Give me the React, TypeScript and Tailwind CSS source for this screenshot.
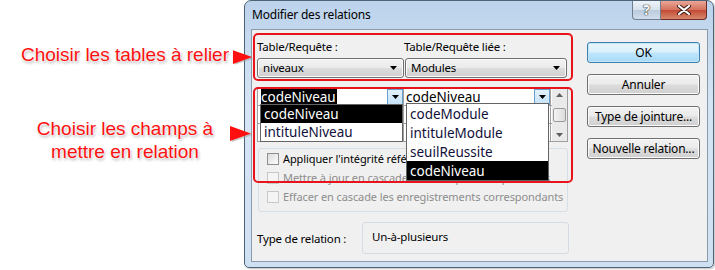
const ui = "font-['Noto_Sans',sans-serif]";

const btnFace =
  "bg-[linear-gradient(#f2f2f2_0%,#ebebeb_48%,#dddddd_52%,#cfcfcf_100%)] border-[#707070] shadow-[inset_0_0_0_1px_#fbfbfb]";
const okFace =
  "bg-[linear-gradient(#eaf6fd_0%,#d9f0fc_48%,#bee6fd_52%,#a7d9f5_100%)] border-[#3c7fb1] shadow-[inset_0_0_0_1px_#c4e5f6]";

function Triangle({ className = "" }: { className?: string }) {
  return (
    <svg viewBox="0 0 7 4" className={"h-[4px] w-[7px] shrink-0 " + className}>
      <path d="M0 0 L7 0 L3.5 4 Z" fill="#000" />
    </svg>
  );
}

function Arrow({ className }: { className: string }) {
  return (
    <svg viewBox="0 0 24 18" className={className}>
      <polygon points="2,2 23,9 2,16" fill="#9a9a9a" opacity="0.5" transform="translate(1,1)" />
      <polygon points="1,1 22,8.5 1,16" fill="#ff1010" />
    </svg>
  );
}

function Button({ label, primary = false }: { label: string; primary?: boolean }) {
  return (
    <div
      className={
        "flex h-[21px] items-center justify-center rounded-[3px] border text-[12px] tracking-[-0.2px] text-black " +
        (primary ? okFace : btnFace)
      }
    >
      {label}
    </div>
  );
}

function Combo({ text, className }: { text: string; className: string }) {
  return (
    <div
      className={
        "flex h-[20px] items-center justify-between rounded-[3px] border pl-[5px] pr-[6px] text-black " +
        btnFace +
        " " +
        className
      }
    >
      <span>{text}</span>
      <Triangle />
    </div>
  );
}

function DropButton() {
  return (
    <div className="flex h-[16px] w-[16px] shrink-0 items-center justify-center border border-[#6aa0d0] bg-[linear-gradient(#e3f1fc,#c6e2f8)]">
      <Triangle />
    </div>
  );
}

function Check({ label, disabled = false }: { label: string; disabled?: boolean }) {
  return (
    <div className="flex h-[19px] items-center gap-[4px] whitespace-nowrap">
      <div
        className={
          "h-[12px] w-[12px] shrink-0 border " +
          (disabled
            ? "border-[#c8c8c8] bg-[#f4f4f4]"
            : "border-[#8e8f8f] bg-[linear-gradient(135deg,#dcdcdc,#fdfdfd)]")
        }
      />
      <span className={"text-[11px] tracking-[-0.1px] " + (disabled ? "text-[#8d8d8d]" : "text-black")}>{label}</span>
    </div>
  );
}

function Grid() {
  return (
    <div className="relative mt-[10px] h-[54px] w-[311px] border border-[#a0a0a0] bg-white text-[13.5px] leading-[16px] tracking-normal">
      <div className="flex h-[17px] border-b border-[#a0a0a0]">
        <div className="flex w-[146px] items-center justify-between border-r border-[#a0a0a0] pl-[3px]">
          <span className="bg-black pr-[1px] text-white">codeNiveau</span>
          <DropButton />
        </div>
        <div className="flex w-[147px] items-center justify-between border-r border-[#a0a0a0] pl-[2px]">
          <span className="text-black">codeNiveau</span>
          <DropButton />
        </div>
        <div />
      </div>
      <div className="flex h-[18px] border-b border-[#a0a0a0]">
        <div className="w-[146px] border-r border-[#a0a0a0]" />
        <div className="w-[147px] border-r border-[#a0a0a0]" />
      </div>
      <div className="flex h-[17px]">
        <div className="w-[146px] border-r border-[#a0a0a0]" />
        <div className="w-[147px] border-r border-[#a0a0a0]" />
      </div>

      {/* scrollbar */}
      <div className="absolute right-0 top-0 flex h-[52px] w-[15px] flex-col items-center justify-between bg-[#eaeaea] py-[4px]">
        <svg viewBox="0 0 7 4" className="h-[4px] w-[7px]">
          <path d="M0 4 L7 4 L3.5 0 Z" fill="#606060" />
        </svg>
        <div className="h-[14px] w-[13px] rounded-[2px] border border-[#9a9a9a] bg-[linear-gradient(90deg,#f3f3f3,#dcdcdc)]" />
        <Triangle className="opacity-60" />
      </div>

      {/* open drop-down lists */}
      <div className="absolute left-[2px] top-[15px] w-[143px] border border-[#646464] bg-white">
        <div className="flex h-[18px] items-center bg-black pl-[3px] text-white">codeNiveau</div>
        <div className="flex h-[18px] items-center pl-[3px] text-[#10103a]">intituleNiveau</div>
      </div>
      <div className="absolute left-[148px] top-[14px] z-10 w-[143px] border border-[#646464] bg-white">
        <div className="flex h-[19px] items-center pl-[3px] text-[#10103a]">codeModule</div>
        <div className="flex h-[19px] items-center pl-[3px] text-[#10103a]">intituleModule</div>
        <div className="flex h-[19px] items-center pl-[3px] text-[#10103a]">seuilReussite</div>
        <div className="flex h-[19px] items-center bg-black pl-[3px] text-white">codeNiveau</div>
      </div>
    </div>
  );
}

function Dialog() {
  return (
    <div
      className={
        "flex h-[268px] w-[470px] shrink-0 flex-col rounded-t-[7px] rounded-b-[5px] border border-[#4f6377] bg-[linear-gradient(#bcd3ec,#d6e5f4_40%,#cfe0f2)] pb-[5px] pl-[6px] pr-[5px] shadow-[1px_1px_2px_rgba(0,0,0,0.25)] " +
        ui
      }
    >
      <div className="flex h-[28px] items-start justify-between">
        <span className="self-center pl-[1px] text-[12px] tracking-[-0.2px] text-black">Modifier des relations</span>
        <div className="mr-[1px] flex">
          <div className="flex h-[19px] w-[29px] items-center justify-center rounded-bl-[4px] border border-t-0 border-[#6f7f90] bg-[linear-gradient(#eef3f8_0%,#d8e2ed_48%,#bccbdb_52%,#d0dded_100%)] text-[14px] font-bold leading-none text-white [text-shadow:0_0_1px_#333,0_0_1px_#333,0_0_1px_#333]">
            ?
          </div>
          <div className="flex h-[19px] w-[46px] items-center justify-center rounded-br-[4px] border border-l-0 border-t-0 border-[#6b2c23] bg-[linear-gradient(#eaa698_0%,#d6735f_48%,#c24b36_52%,#d88a6c_100%)]">
            <svg viewBox="0 0 14 10" className="h-[10px] w-[14px]">
              <path d="M2 1 L12 9 M12 1 L2 9" stroke="#3a1a14" strokeWidth="4" strokeLinecap="round" />
              <path d="M2 1 L12 9 M12 1 L2 9" stroke="#ffffff" strokeWidth="2.2" strokeLinecap="round" />
            </svg>
          </div>
        </div>
      </div>

      <div className="flex flex-1 border border-[#8a9bad] bg-[#f0f0f0] text-[11.5px] leading-[16px] tracking-[-0.2px]">
        <div className="ml-[5px] flex w-[312px] flex-col pt-[9px]">
          <div className="flex h-[16px] text-black">
            <span className="w-[147px]">Table/Requête :</span>
            <span>Table/Requête liée :</span>
          </div>
          <div className="mt-[3px] flex gap-[1px]">
            <Combo text="niveaux" className="w-[147px]" />
            <Combo text="Modules" className="w-[162px]" />
          </div>

          <Grid />

          <div className="ml-[1px] mt-[6px] h-[64px] w-[310px] rounded-[3px] border border-[#d5dfe5] pl-[8px]">
            <Check label="Appliquer l'intégrité référentielle" />
            <Check label="Mettre à jour en cascade les champs correspondants" disabled />
            <Check label="Effacer en cascade les enregistrements correspondants" disabled />
          </div>

          <div className="mt-[10px] flex items-center">
            <span className="mt-[2px] w-[105px] text-black">Type de relation :</span>
            <div className="h-[32px] w-[207px] rounded-[3px] border border-[#d5dbe2] pl-[9px] pt-[6px] text-black">
              Un-à-plusieurs
            </div>
          </div>
        </div>

        <div className="ml-[18px] flex w-[113px] flex-col gap-[11px] pt-[12px]">
          <Button label="OK" primary />
          <Button label="Annuler" />
          <Button label="Type de jointure..." />
          <Button label="Nouvelle relation..." />
        </div>
      </div>
    </div>
  );
}

function Notes() {
  return (
    <div className="flex w-[244px] shrink-0 flex-col items-center pl-[6px] pt-[44px] font-['Liberation_Sans',Arial,sans-serif] text-[19px] text-[#ff1010] [text-shadow:0_0_2px_#fff,0_0_2px_#fff,1px_2px_3px_rgba(0,0,0,0.35)]">
      <p className="leading-[22px]">Choisir les tables à relier</p>
      <p className="mt-[51px] text-center leading-[23px]">
        Choisir les champs à
        <br />
        mettre en relation
      </p>
    </div>
  );
}

export default function App() {
  return (
    <div className="relative flex h-[270px] w-[715px] overflow-hidden bg-white">
      <Notes />
      <Dialog />

      {/* annotation frames and arrows lying over the dialog */}
      <div className="pointer-events-none absolute left-[253px] top-[33px] h-[48px] w-[320px] rounded-[5px] border-2 border-[#e8141c]" />
      <div className="pointer-events-none absolute left-[253px] top-[87px] z-20 h-[96px] w-[320px] rounded-[5px] border-2 border-[#e8141c]" />
      <Arrow className="absolute left-[232px] top-[49px] h-[17px] w-[22px]" />
      <Arrow className="absolute left-[229px] top-[125px] h-[18px] w-[24px]" />
    </div>
  );
}
